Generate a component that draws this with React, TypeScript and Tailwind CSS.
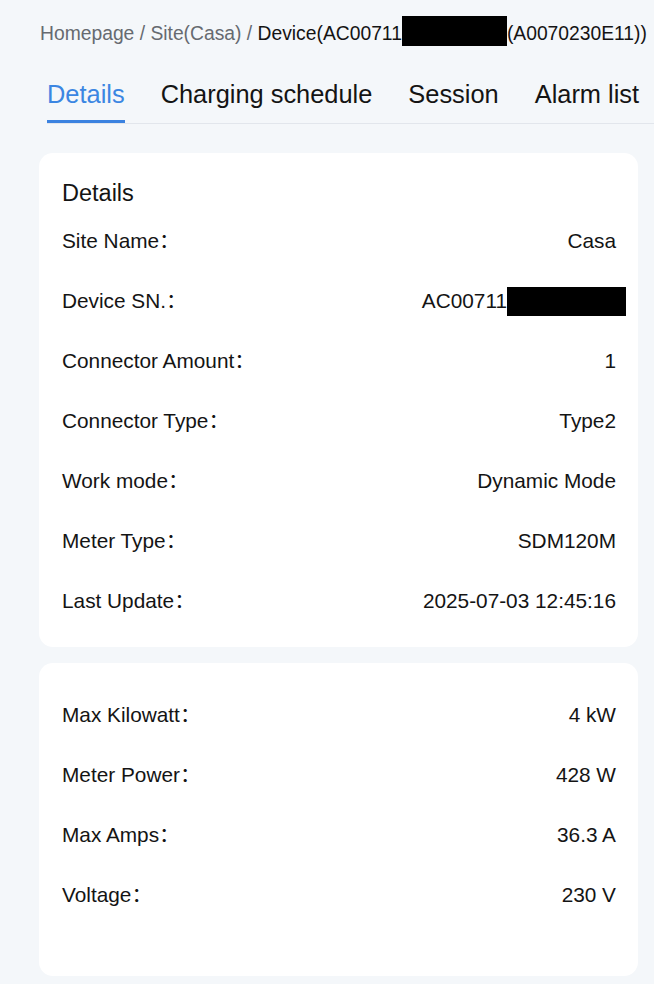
const font = { fontFamily: '"Liberation Sans", Arial, "Noto Sans CJK SC", sans-serif' };

const mainRows = [
  { label: "Site Name", value: "Casa" },
  { label: "Device SN.", value: "AC00711", masked: true },
  { label: "Connector Amount", value: "1" },
  { label: "Connector Type", value: "Type2" },
  { label: "Work mode", value: "Dynamic Mode" },
  { label: "Meter Type", value: "SDM120M" },
  { label: "Last Update", value: "2025-07-03 12:45:16" },
];

const powerRows = [
  { label: "Max Kilowatt", value: "4 kW" },
  { label: "Meter Power", value: "428 W" },
  { label: "Max Amps", value: "36.3 A" },
  { label: "Voltage", value: "230 V" },
];

const tabs = ["Details", "Charging schedule", "Session", "Alarm list"];

type Row = { label: string; value: string; masked?: boolean };

const InfoRow = ({ label, value, masked }: Row) => (
  <div className="flex h-[60px] items-center justify-between whitespace-nowrap text-[20.8px] text-[#141414]">
    <span>
      {label}
      <span className="-mr-[6px]">：</span>
    </span>
    <span className="flex items-center">
      {value}
      {masked && <span className="-mr-[10px] inline-block h-[29px] w-[119px] bg-black" />}
    </span>
  </div>
);

export default function App() {
  return (
    <div className="min-h-[984px] overflow-hidden bg-[#f4f7fa] pb-[8px]" style={font}>
      <div className="ml-[40px] mt-[20px] flex h-[28px] items-center whitespace-pre text-[19.3px] text-[#666a70]">
        <span>Homepage / Site(Casa) / </span>
        <span className="text-[#141414]">Device(AC00711</span>
        <span className="h-[30px] w-[105px] -translate-y-[3px] bg-black" />
        <span className="text-[#141414]">(A0070230E11))</span>
      </div>

      <div className="ml-[47px] mt-[31px] flex gap-[36px] whitespace-nowrap border-b border-[#e2e6ec]">
        {tabs.map((t, i) => (
          <div
            key={t}
            className={
              i === 0
                ? "border-b-[3px] border-[#3b82e0] pb-[11px] text-[25.4px] leading-[30px] text-[#3b86e2]"
                : "border-b-[3px] border-transparent pb-[11px] text-[25.4px] leading-[30px] text-[#141414]"
            }
          >
            {t}
          </div>
        ))}
      </div>

      <div className="ml-[39px] mt-[29px] w-[599px] rounded-[14px] bg-white pb-[16px] pl-[23px] pr-[22px] pt-[22px]">
        <h2 className="h-[36px] text-[23.5px] leading-[36px] text-[#141414]">Details</h2>
        {mainRows.map((r) => (
          <InfoRow key={r.label} {...r} />
        ))}
      </div>

      <div className="ml-[39px] mt-[16px] w-[599px] rounded-[14px] bg-white pb-[51px] pl-[23px] pr-[22px] pt-[22px]">
        {powerRows.map((r) => (
          <InfoRow key={r.label} {...r} />
        ))}
      </div>
    </div>
  );
}
